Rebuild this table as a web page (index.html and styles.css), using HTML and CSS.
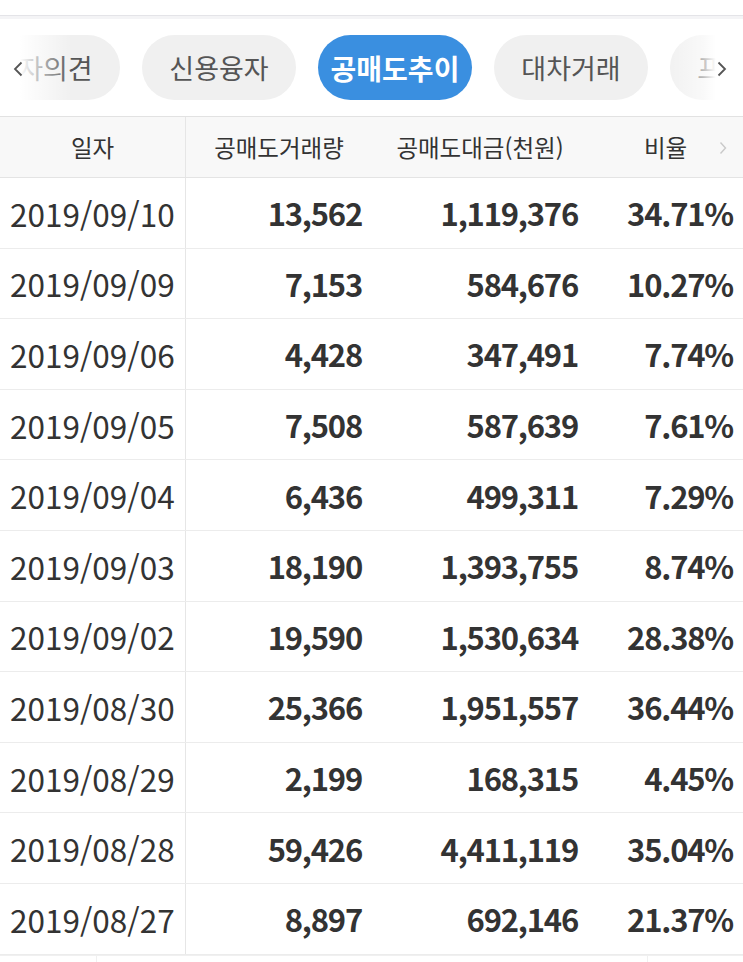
FILE: index.html
```html
<!DOCTYPE html>
<html lang="ko">
<head>
<meta charset="utf-8">
<link rel="stylesheet" href="styles.css">
</head>
<body>
<div class="topbar"></div>
<div class="tabs-wrap">
  <div class="tabs">
    <div class="pill">투자의견</div>
    <div class="pill">신용융자</div>
    <div class="pill active">공매도추이</div>
    <div class="pill">대차거래</div>
    <div class="pill">프로그램</div>
  </div>
  <div class="fade fade-left">
    <svg class="arrow" width="10" height="16" viewBox="0 0 10 16"><path d="M8.5 1.5 L2 8 L8.5 14.5" fill="none" stroke="#555" stroke-width="1.8"/></svg>
  </div>
  <div class="fade fade-right">
    <svg class="arrow" width="10" height="16" viewBox="0 0 10 16"><path d="M1.5 1.5 L8 8 L1.5 14.5" fill="none" stroke="#555" stroke-width="1.8"/></svg>
  </div>
</div>
<div class="table">
  <div class="row head">
    <div class="cell c1">일자</div>
    <div class="cell c2">공매도거래량</div>
    <div class="cell c3">공매도대금(천원)</div>
    <div class="cell c4">비율<svg class="chev" width="8" height="14" viewBox="0 0 8 14"><path d="M1.5 1.5 L6.5 7 L1.5 12.5" fill="none" stroke="#c9c9c9" stroke-width="1.4"/></svg></div>
  </div>
  <div class="row"><div class="cell c1">2019/09/10</div><div class="cell num">13,562</div><div class="cell num">1,119,376</div><div class="cell num">34.71%</div></div>
  <div class="row"><div class="cell c1">2019/09/09</div><div class="cell num">7,153</div><div class="cell num">584,676</div><div class="cell num">10.27%</div></div>
  <div class="row"><div class="cell c1">2019/09/06</div><div class="cell num">4,428</div><div class="cell num">347,491</div><div class="cell num">7.74%</div></div>
  <div class="row"><div class="cell c1">2019/09/05</div><div class="cell num">7,508</div><div class="cell num">587,639</div><div class="cell num">7.61%</div></div>
  <div class="row"><div class="cell c1">2019/09/04</div><div class="cell num">6,436</div><div class="cell num">499,311</div><div class="cell num">7.29%</div></div>
  <div class="row"><div class="cell c1">2019/09/03</div><div class="cell num">18,190</div><div class="cell num">1,393,755</div><div class="cell num">8.74%</div></div>
  <div class="row"><div class="cell c1">2019/09/02</div><div class="cell num">19,590</div><div class="cell num">1,530,634</div><div class="cell num">28.38%</div></div>
  <div class="row"><div class="cell c1">2019/08/30</div><div class="cell num">25,366</div><div class="cell num">1,951,557</div><div class="cell num">36.44%</div></div>
  <div class="row"><div class="cell c1">2019/08/29</div><div class="cell num">2,199</div><div class="cell num">168,315</div><div class="cell num">4.45%</div></div>
  <div class="row"><div class="cell c1">2019/08/28</div><div class="cell num">59,426</div><div class="cell num">4,411,119</div><div class="cell num">35.04%</div></div>
  <div class="row"><div class="cell c1">2019/08/27</div><div class="cell num">8,897</div><div class="cell num">692,146</div><div class="cell num">21.37%</div></div>
</div>
<div class="below">
  <div class="b1"></div><div class="b2"></div>
</div>
</body>
</html>
```

FILE: styles.css
```css
* { box-sizing: border-box; }
html, body { margin: 0; padding: 0; background: #fff; }
body {
  font-family: "Noto Sans CJK KR", "Noto Sans", sans-serif;
  color: #333;
  width: 743px;
  overflow: hidden;
}
.topbar {
  height: 19px;
  border-bottom: 3px solid #f4f4f6;
  box-shadow: inset 0 -1px 0 #e4e4e8;
}
.tabs-wrap {
  position: relative;
  height: 97px;
  overflow: hidden;
}
.tabs {
  display: flex;
  gap: 22px;
  margin-left: -34px;
  padding-top: 16px;
}
.pill {
  flex: 0 0 154px;
  height: 65px;
  border-radius: 33px;
  background: #f0f0f0;
  color: #555;
  font-size: 27px;
  display: flex;
  align-items: center;
  justify-content: center;
}
.pill.active {
  background: #3a8fe0;
  color: #fff;
  font-weight: 700;
  font-size: 28px;
}
.fade {
  position: absolute;
  top: 0;
  bottom: 0;
  display: flex;
  align-items: center;
}
.fade-left {
  left: 0;
  width: 72px;
  background: linear-gradient(to right, rgba(255,255,255,1) 0%, rgba(255,255,255,1) 28%, rgba(255,255,255,0.75) 45%, rgba(255,255,255,0) 100%);
  padding-left: 13px;
}
.fade-right {
  right: 0;
  width: 80px;
  background: linear-gradient(to left, rgba(255,255,255,1) 0%, rgba(255,255,255,1) 34%, rgba(255,255,255,0.6) 50%, rgba(255,255,255,0) 100%);
  justify-content: flex-end;
  padding-right: 16px;
}
.arrow { display: block; margin-top: 2px; }
.table {
  border-top: 1px solid #e2e2e2;
}
.row {
  display: grid;
  grid-template-columns: 186px 186px 216px 1fr;
  height: 70.6px;
  border-bottom: 1px solid #ececec;
  align-items: center;
}
.row.head {
  height: 61px;
  background: #f8f8f8;
  border-bottom: 1px solid #e4e4e4;
}
.cell {
  height: 100%;
  display: flex;
  align-items: center;
  padding: 0 10px;
}
.c1 {
  border-right: 1px solid #e6e6e6;
  font-size: 31.5px;
  color: #333;
}
.head .cell {
  justify-content: center;
  font-size: 23.5px;
  color: #333;
  position: relative;
}
.head .c1 { font-size: 23.5px; }
.chev {
  position: absolute;
  right: 16px;
  top: 24px;
}
.num {
  justify-content: flex-end;
  font-size: 31px;
  font-weight: 700;
  letter-spacing: -1.2px;
  color: #333;
}
.below {
  height: 8px;
  position: relative;
  border-top: 1px solid #f0f0f0;
}
.b1, .b2 { position: absolute; top: 0; bottom: 0; width: 1px; background: #f0f0f0; }
.b1 { left: 96px; }
.b2 { left: 647px; }
```
